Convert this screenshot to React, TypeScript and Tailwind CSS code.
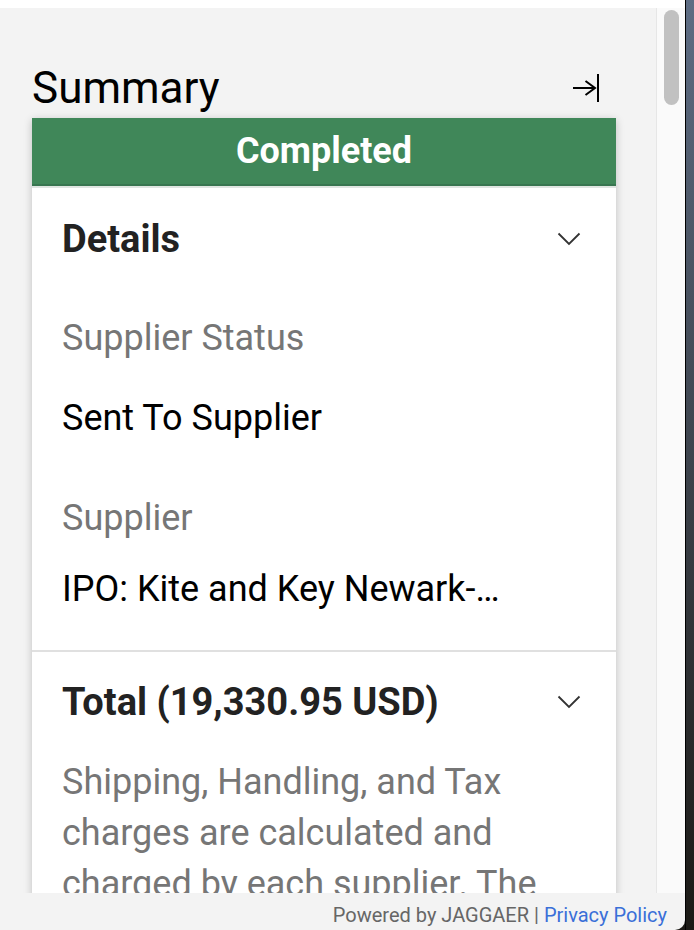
import React from "react";

function CollapseIcon() {
  return (
    <svg width="28" height="30" viewBox="0 0 28 30" fill="none" stroke="#000" strokeWidth="2">
      <line x1="1" y1="15" x2="23" y2="15" />
      <polyline points="13.5,8 23,15 13.5,22" />
      <line x1="26" y1="1" x2="26" y2="29" />
    </svg>
  );
}

function Chevron() {
  return (
    <svg width="24" height="14" viewBox="0 0 24 14" fill="none" stroke="#333" strokeWidth="1.8">
      <polyline points="1.5,1.5 12,12 22.5,1.5" />
    </svg>
  );
}

function Field({ label, value, gap }: { label: string; value: string; gap: string }) {
  return (
    <div>
      <div className="text-[36px] leading-[40px] text-[#767676]">{label}</div>
      <div className={`${gap} text-[36px] leading-[40px] text-black whitespace-nowrap`}>{value}</div>
    </div>
  );
}

export default function App() {
  return (
    <div className="flex h-[930px] w-[694px] overflow-hidden bg-gradient-to-b from-[#5e6d84] via-[#3d434c] to-[#1b1915] font-['Roboto',sans-serif]">
      <div className="flex w-[686px] flex-col border-r border-black">
        <div className="h-[8px] bg-white" />

        <div className="flex min-h-0 flex-1">
          {/* panel */}
          <div className="min-h-0 flex-1 overflow-hidden border-r border-[#e6e6e6] bg-[#f3f3f3] px-8 pt-[55px]">
            <div className="flex w-[584px] items-center justify-between pr-4">
              <h1 className="text-[44px] leading-[50px] text-black">Summary</h1>
              <CollapseIcon />
            </div>

            <div className="mt-[5px] w-[584px] bg-white shadow-[0_2px_8px_rgba(0,0,0,0.22)]">
              <div className="flex h-[68px] items-center justify-center border-b-2 border-[#387650] bg-[#408759]">
                <span className="text-[36px] font-bold leading-[44px] text-white">Completed</span>
              </div>
              <div className="h-[2px] bg-[#dfe5e1]" />

              <section className="px-[30px] pt-[29px] pb-[41px]">
                <div className="flex items-center justify-between pr-[5px]">
                  <h2 className="text-[38px] font-bold leading-[44px] text-[#222]">Details</h2>
                  <Chevron />
                </div>
                <div className="mt-[57px]">
                  <Field label="Supplier Status" value="Sent To Supplier" gap="mt-[40px]" />
                </div>
                <div className="mt-[60px]">
                  <Field label="Supplier" value="IPO: Kite and Key Newark-…" gap="mt-[31px]" />
                </div>
              </section>

              <section className="border-t-2 border-[#e0e0e0] px-[30px] pt-[28px] pb-8">
                <div className="flex items-center justify-between pr-[5px]">
                  <h2 className="text-[38px] font-bold leading-[44px] text-[#222]">Total (19,330.95 USD)</h2>
                  <Chevron />
                </div>
                <p className="mt-[33px] text-[36px] leading-[51px] text-[#767676]">
                  Shipping, Handling, and Tax charges are calculated and charged by each supplier. The values shown
                  here are for estimation purposes, budget checking and workflow.
                </p>
              </section>
            </div>
          </div>

          {/* scrollbar */}
          <div className="w-[28px] bg-[#fafafa] px-[7px] pt-[2px]">
            <div className="h-[95px] w-[15px] rounded-full bg-[#c1c1c1]" />
          </div>
        </div>

        <footer className="flex h-[37px] items-center justify-end rounded-br-[10px] bg-[#f3f3f3] pr-[18px] pt-[6px] text-[20px] leading-[24px]">
          <span className="text-[#666]">
            Powered by JAGGAER | <a href="#" className="text-[#3a6fd8]">Privacy Policy</a>
          </span>
        </footer>
      </div>
    </div>
  );
}
